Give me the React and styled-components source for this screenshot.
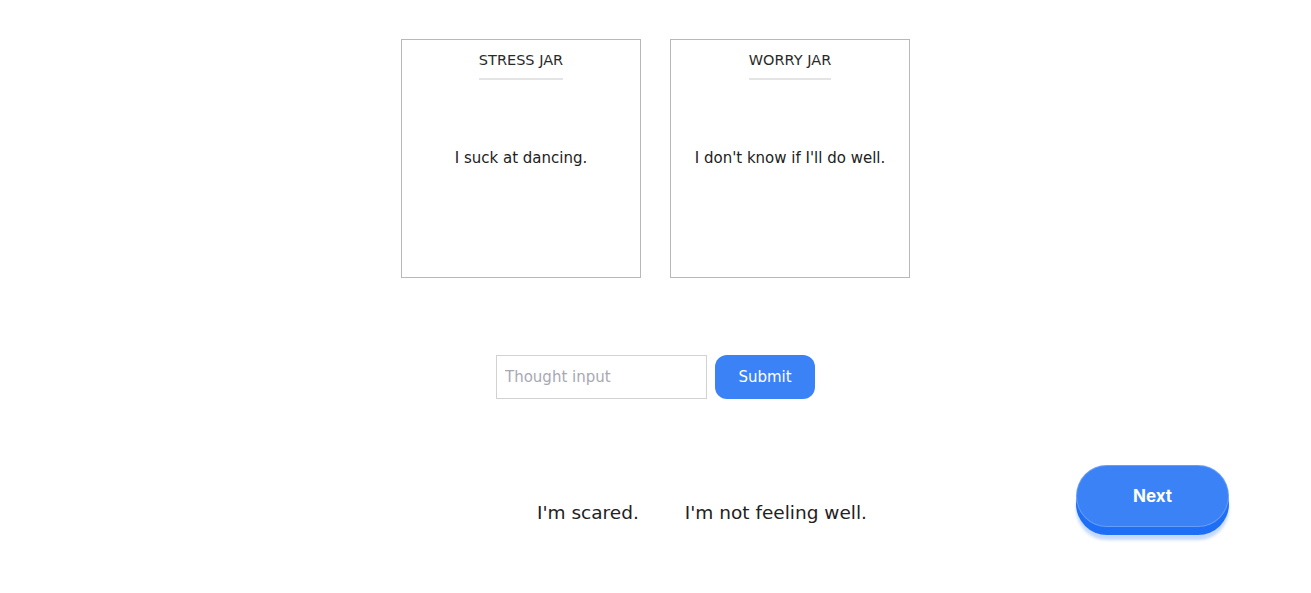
import React, { useState } from 'react'
import styled, { createGlobalStyle } from 'styled-components'

const GlobalStyle = createGlobalStyle`
  body {
    margin: 0;
    background: #fff;
    font-family: 'DejaVu Sans', 'Open Sans', sans-serif;
    color: #222;
  }
`

const Page = styled.main`
  min-height: 100vh;
  box-sizing: border-box;
  display: flex;
  flex-direction: column;
  align-items: center;
  padding-top: 39px;
`

const JarRow = styled.section`
  display: flex;
  gap: 29px;
`

const Jar = styled.div`
  width: 238px;
  height: 237px;
  border: 1px solid #b8b8b8;
  display: flex;
  flex-direction: column;
  align-items: center;
`

const JarTitle = styled.h2`
  margin: 10px 0 0;
  padding-bottom: 8px;
  border-bottom: 2px solid #e4e4e4;
  font-size: 14.5px;
  font-weight: 400;
  line-height: 20px;
  color: #2a2a2a;
`

const JarBody = styled.p`
  flex: 1;
  margin: 0 0 41px;
  display: flex;
  align-items: center;
  font-size: 15px;
  color: #222;
`

const InputRow = styled.form`
  display: flex;
  gap: 8px;
  margin-top: 77px;
`

const ThoughtInput = styled.input`
  box-sizing: border-box;
  width: 211px;
  height: 44px;
  border: 1px solid #d2d2d2;
  padding: 0 8px;
  font-family: inherit;
  font-size: 15px;
  color: #222;
  outline: none;

  &::placeholder {
    color: #a8a8b4;
  }
`

const SubmitButton = styled.button`
  width: 100px;
  height: 44px;
  border: none;
  border-radius: 12px;
  background: #3b82f6;
  color: #fff;
  font-family: inherit;
  font-size: 15px;
  cursor: pointer;
`

const BottomRow = styled.section`
  align-self: stretch;
  display: flex;
  align-items: flex-end;
  padding: 0 82px 0 537px;
  margin-top: 66px;
`

const Phrase = styled.span`
  font-size: 18.5px;
  line-height: 28px;
  color: #222;
  margin-right: ${p => p.gap}px;
`

const NextButton = styled.button`
  margin-left: auto;
  width: 153px;
  height: 62px;
  border: 1px solid rgba(255, 255, 255, 0.22);
  border-radius: 31px;
  background: #3b82f6;
  color: #fff;
  font-family: 'Inter', sans-serif;
  font-size: 17px;
  font-weight: 700;
  box-shadow: 0 8px 0 #1f6ff6, 0 13px 3px rgba(59, 130, 246, 0.3);
  cursor: pointer;
`

const jars = [
  { title: 'STRESS JAR', thought: 'I suck at dancing.' },
  { title: 'WORRY JAR', thought: "I don't know if I'll do well." }
]

const App = () => {
  const [thought, setThought] = useState('')
  return (
    <Page>
      <GlobalStyle />
      <JarRow>
        {jars.map(jar => (
          <Jar key={jar.title}>
            <JarTitle>{jar.title}</JarTitle>
            <JarBody>{jar.thought}</JarBody>
          </Jar>
        ))}
      </JarRow>
      <InputRow onSubmit={e => e.preventDefault()}>
        <ThoughtInput
          placeholder='Thought input'
          value={thought}
          onChange={e => setThought(e.target.value)}
        />
        <SubmitButton type='submit'>Submit</SubmitButton>
      </InputRow>
      <BottomRow>
        <Phrase gap={46}>I'm scared.</Phrase>
        <Phrase gap={0}>I'm not feeling well.</Phrase>
        <NextButton>Next</NextButton>
      </BottomRow>
    </Page>
  )
}

export default App
